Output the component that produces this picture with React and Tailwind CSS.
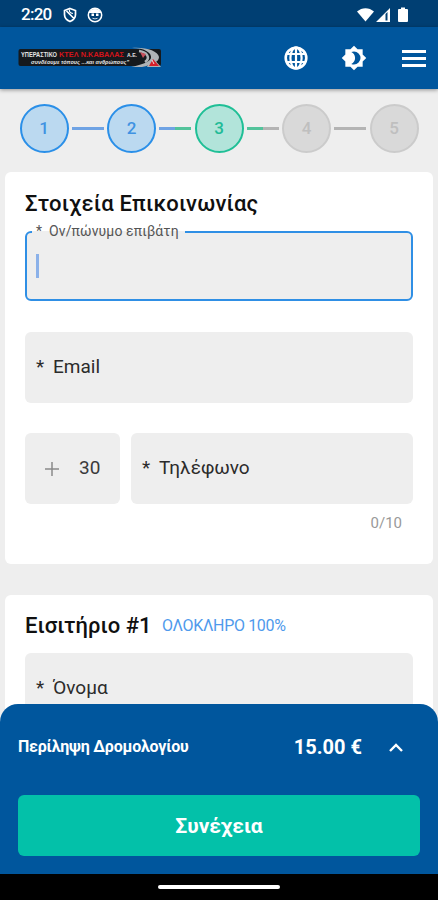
import React from "react";

const steps = [
  { n: 1, circle: "border-[#2a8fe8] bg-[#bbd9f0] text-[#3f92e2]", line: "bg-[#6fa3e4]" },
  { n: 2, circle: "border-[#2a8fe8] bg-[#bbd9f0] text-[#3f92e2]", line: "bg-linear-to-r from-[#6fa3e4] from-50% to-[#53c39b] to-50%" },
  { n: 3, circle: "border-[#1fbf96] bg-[#b2e4da] text-[#22bb97]", line: "bg-linear-to-r from-[#53c39b] from-50% to-[#b4b4b4] to-50%" },
  { n: 4, circle: "border-[#cbcbcb] bg-[#d9d9d9] text-[#bfbfbf]", line: "bg-[#b4b4b4]" },
  { n: 5, circle: "border-[#cbcbcb] bg-[#d9d9d9] text-[#bfbfbf]" },
];

function StatusBar() {
  return (
    <div className="flex h-[27px] shrink-0 items-center bg-[#003f73] pl-[21px] pr-[30px] pt-[2px] text-white">
      <span className="w-[42px] text-[17px] font-medium leading-none tracking-[-0.75px]">2:20</span>
      <svg className="h-4 w-[14px]" viewBox="0 0 14 16" fill="none" stroke="currentColor" strokeWidth="1.700">
        <path d="M7 1.500 12.500 3.500v4c0 3.500-2.300 5.700-5.500 7C3.800 13.200 1.500 11 1.500 7.500v-4ZM3.500 4l7.500 7.500" />
        <path d="M6.500 2.500c-.5 2 .5 3.500 3.500 4" strokeWidth="1.200" />
      </svg>
      <svg className="ml-[10px] h-4 w-4" viewBox="0 0 16 16" fill="none" stroke="currentColor">
        <circle cx="8" cy="8" r="6.700" strokeWidth="1.500" />
        <path d="M2 5.500Q8-1 14 5.500Z" fill="currentColor" />
        <path d="M4.500 6.500h2.500v2.500H4.500ZM9 6.500h2.500v2.500H9Z" fill="currentColor" stroke="none" />
        <path d="M5.500 11.300q2.500 1.200 5 0" strokeWidth=".8" />
      </svg>
      <svg className="ml-auto h-[16px] w-[52px]" viewBox="0 0 52 16" fill="currentColor">
        <path d="M1 4.500C6 0 13 0 18 4.500L9.500 14.500Z" />
        <path fillRule="evenodd" d="M20 15 34 1v14ZM29.500 7v6.500h2V5Z" />
        <path d="M43 2h2V.5h4V2h2q1 0 1 1v11q0 1-1 1h-8q-1 0-1-1V3q0-1 1-1Z" />
      </svg>
    </div>
  );
}

function Logo() {
  return (
    <svg className="h-[22px] w-[144px]" viewBox="0 0 144 22" fontFamily="'Liberation Sans', sans-serif" fontWeight="700">
      <rect x="0.500" y="2" width="142.500" height="17" rx="2" fill="#15191d" />
      <text x="3" y="9.500" fontSize="6.500" fill="#e4e4e4" textLength="36" lengthAdjust="spacingAndGlyphs">ΥΠΕΡΑΣΤΙΚΟ</text>
      <text x="41" y="9.500" fontSize="8" fill="#d3141b" textLength="65" lengthAdjust="spacingAndGlyphs">ΚΤΕΛ Ν.ΚΑΒΑΛΑΣ</text>
      <text x="109" y="9.500" fontSize="6" fill="#e4e4e4" textLength="10" lengthAdjust="spacingAndGlyphs">Α.Ε.</text>
      <text x="13" y="17" fontSize="6" fontStyle="italic" fill="#e4e4e4" textLength="98" lengthAdjust="spacingAndGlyphs">συνδέουμε τόπους ...και ανθρώπους"</text>
      <path d="M114 1c13 0 20 5 19 10-1 4-10 7-20 9h11c10-2 17-5 17-10C140 4 128 0 114 1Z" fill="#aeb2b5" />
      <path d="M121 4c8 1 12 7 6 11" fill="none" stroke="#aeb2b5" strokeWidth="2.500" />
      <path d="m122 5 6 2-3 4Z" fill="#c8505c" />
      <path d="m134 10 9 10h-14Z" fill="#aeb2b5" />
      <path d="m135 12 6 7h-10Z" fill="#d61f2a" />
      <path d="m134 13 2 4" stroke="#f3dadc" />
    </svg>
  );
}

function Header() {
  return (
    <header className="z-10 flex h-[62px] shrink-0 items-center bg-[#00569d] pl-[18px] pr-3 text-white shadow-[0_1px_4px_rgba(0,0,0,0.4)]">
      <Logo />
      <svg className="ml-auto h-6 w-6" viewBox="0 0 24 24" fill="none" stroke="currentColor" strokeWidth="2.200">
        <circle cx="12" cy="12" r="10.300" strokeWidth="2.600" />
        <ellipse cx="12" cy="12" rx="5.600" ry="10.600" />
        <path d="M12 1v22M2.500 8h19M2.500 16h19" />
      </svg>
      <svg className="ml-[33px] h-[26px] w-[26px]" viewBox="0 0 24 24" fill="currentColor">
        <path d="M12,18C11.11,18 10.26,17.8 9.5,17.45C11.56,16.5 13,14.42 13,12C13,9.58 11.56,7.5 9.5,6.55C10.26,6.2 11.11,6 12,6A6,6 0 0,1 18,12A6,6 0 0,1 12,18M20,8.69V4H15.31L12,0.69L8.69,4H4V8.69L0.69,12L4,15.31V20H8.69L12,23.31L15.31,20H20V15.31L23.31,12L20,8.69Z" />
      </svg>
      <div className="ml-[35px] flex w-6 flex-col gap-1">
        <div className="h-[3px] bg-white" />
        <div className="h-[3px] bg-white" />
        <div className="h-[3px] bg-white" />
      </div>
    </header>
  );
}

function Stepper() {
  return (
    <div className="flex h-[83px] shrink-0 items-center justify-between px-[19.500px] pb-[4px]">
      {steps.map((s) => (
        <React.Fragment key={s.n}>
          <div className={`flex size-[49px] items-center justify-center rounded-full border-2 text-[17px] font-medium ${s.circle}`}>{s.n}</div>
          {s.line && <div className={`h-[3px] w-8 ${s.line}`} />}
        </React.Fragment>
      ))}
    </div>
  );
}

function Field({ label, className = "" }) {
  return (
    <div className={`flex h-[71px] items-center rounded-md bg-[#eee] pb-px pl-[11px] text-[19px] text-[#2b2b2b] ${className}`}>
      <span className="w-[17px]">*</span>
      <span>{label}</span>
    </div>
  );
}

export default function App() {
  return (
    <div className="flex h-[900px] w-[438px] flex-col overflow-hidden bg-[#eee] font-[Roboto,sans-serif]">
      <StatusBar />
      <Header />
      <div className="flex h-[785px] shrink-0 flex-col">
        <Stepper />
        <main className="-mb-5 flex h-[552px] shrink-0 flex-col gap-[31px] overflow-hidden px-[5px]">
          <section className="h-[392px] shrink-0 rounded-md bg-white px-5 pt-[18px]">
            <h2 className="h-[41px] text-[22px] font-medium leading-[28px] tracking-[0.2px] text-[#101010]">Στοιχεία Επικοινωνίας</h2>
            <div className="relative flex h-[70px] items-center rounded-md border-2 border-[#2f8fe5] bg-[#eee] pl-[9px]">
              <div className="h-6 w-[3px] bg-[#8bb1e9]" />
              <span className="absolute -top-[11px] left-[5px] flex h-[18px] w-[153px] items-center bg-linear-to-b from-white from-50% to-[#eee] to-50% pl-[4px] text-[14px] text-[#555]">
                <span className="w-[13px]">*</span>
                <span className="tracking-[0.12px]">Ον/πώνυμο επιβάτη</span>
              </span>
            </div>
            <Field label="Email" className="mt-[31px]" />
            <div className="mt-[30px] flex gap-[11px]">
              <div className="flex h-[71px] w-[95px] items-center rounded-md bg-[#eee] pl-5 text-[19px] text-[#3a3a3a]">
                <svg className="mr-5 h-[14px] w-[14px]" viewBox="0 0 14 14" stroke="#8a8a8a" strokeWidth="1.500">
                  <path d="M7 0v14M0 7h14" />
                </svg>
                30
              </div>
              <Field label="Τηλέφωνο" className="flex-1" />
            </div>
            <div className="pr-[11px] pt-[9px] text-right text-[15px] leading-5 text-[#999]">0/10</div>
          </section>
          <section className="h-[160px] shrink-0 rounded-t-md bg-white px-5 pt-[17px]">
            <div className="flex h-[41px] items-start">
              <h2 className="w-[137px] whitespace-nowrap text-[22px] font-medium leading-[28px] tracking-[0.05px] text-[#101010]">Εισιτήριο #1</h2>
              <span className="text-[16px] leading-[27px] tracking-[-0.34px] text-[#4f9aec]">ΟΛΟΚΛΗΡΟ 100%</span>
            </div>
            <Field label="Όνομα" />
          </section>
        </main>
        <footer className="z-10 flex h-[170px] shrink-0 flex-col rounded-t-[18px] bg-[#00569d] px-[18px] text-white">
          <div className="flex h-[91px] items-center pb-[5px]">
            <span className="text-[16px] font-bold tracking-[-0.22px]">Περίληψη Δρομολογίου</span>
            <span className="ml-auto mr-[27px] text-[20px] font-bold">15.00 €</span>
            <svg className="mr-[17px] h-[9px] w-[14px]" viewBox="0 0 14 9" fill="none" stroke="currentColor" strokeWidth="2.400">
              <path d="m1 8 6-6 6 6" />
            </svg>
          </div>
          <button className="h-[61px] w-full rounded-md bg-[#03c1a9] pt-[2px] text-[21px] font-bold">Συνέχεια</button>
        </footer>
      </div>
      <div className="flex h-[26px] shrink-0 items-center justify-center bg-black">
        <div className="h-1 w-[122px] rounded-full bg-white" />
      </div>
    </div>
  );
}
